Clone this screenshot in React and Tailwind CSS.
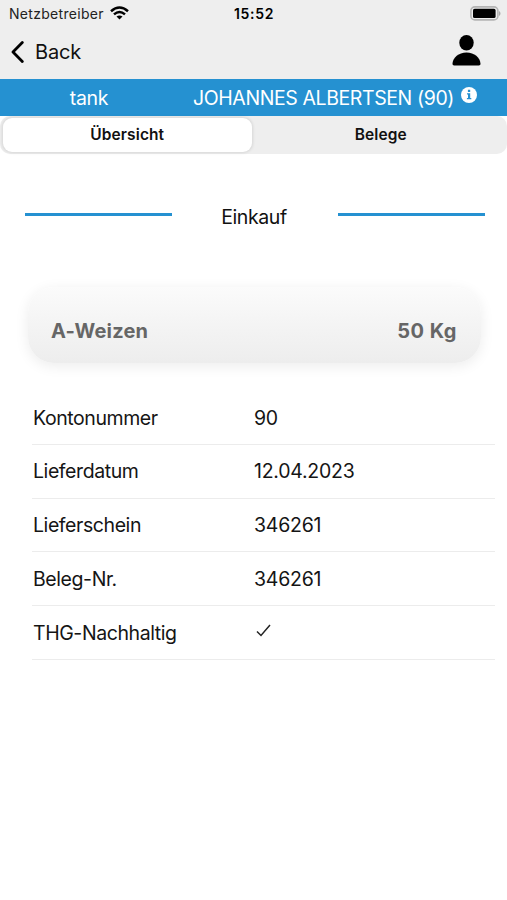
import React, { useState } from 'react';

const rows = [
  { label: 'Kontonummer', value: '90' },
  { label: 'Lieferdatum', value: '12.04.2023' },
  { label: 'Lieferschein', value: '346261' },
  { label: 'Beleg-Nr.', value: '346261' },
  { label: 'THG-Nachhaltig', value: true },
];

// Carrier, clock and battery
function StatusBar() {
  return (
    <div className="grid h-[27px] grid-cols-3 items-center pl-[9px] pr-[6px] text-[14px] text-[#222]">
      <div className="flex items-center gap-[6px]">
        <span className="tracking-[0.3px]">Netzbetreiber</span>
        <svg className="mb-[2px] h-[14px] w-[19px]" viewBox="0 0 19 14" fill="none" stroke="#000" strokeWidth="2.5">
          <path d="M1 5.2Q9.5-2.2 18 5.2" />
          <path d="M4 8.4Q9.5 3.6 15 8.4" />
          <path d="M9.5 13.4L6.5 10.6Q9.5 8.2 12.5 10.6Z" fill="#000" stroke="none" />
        </svg>
      </div>
      <span className="-ml-[2px] text-center font-semibold tracking-[0.7px] text-black">15:52</span>
      <svg className="h-[15px] w-[31px] justify-self-end" viewBox="0 0 31 15">
        <rect x="0.9" y="0.9" width="27" height="13" rx="4" fill="none" stroke="#b4b4b4" strokeWidth="1.6" />
        <rect x="3" y="2.8" width="22.6" height="9.2" rx="1.6" fill="#000" />
        <path d="M29 5v5c2-1 2-4 0-5z" fill="#aaa" />
      </svg>
    </div>
  );
}

function Header() {
  return (
    <div className="flex h-[52px] items-center justify-between pl-[11px] pr-[26px]">
      <button className="flex items-center gap-[11px] pb-[2px] text-[20px] text-[#111]">
        <svg className="h-[22px] w-[13px]" viewBox="0 0 13 22" fill="none" stroke="#000" strokeWidth="2.8" strokeLinecap="round" strokeLinejoin="round">
          <path d="M11.3 1.6L2 11l9.3 9.4" />
        </svg>
        <span className="-mt-px tracking-[-0.2px]">Back</span>
      </button>
      <svg className="mb-[5px] h-[31px] w-[29px]" viewBox="0 0 29 31">
        <ellipse cx="14.5" cy="7.8" rx="7.2" ry="7.7" />
        <path d="M2.3 30.500C1 30.500.4 29.800.5 28.500 1 22.500 6.500 17.500 14.500 17.500S28 22.500 28.500 28.500c.1 1.300-.5 2-1.800 2z" />
      </svg>
    </div>
  );
}

function AccountBar() {
  return (
    <div className="flex h-[37px] items-center bg-[#2591d1] pt-[2px] text-[19.500px] text-white">
      <span className="w-[178px] text-center tracking-[-0.3px]">tank</span>
      <div className="ml-[15px] flex items-center gap-[7px]">
        <span className="whitespace-nowrap tracking-[-0.4px]">JOHANNES ALBERTSEN (90)</span>
        <svg className="mb-[7px] h-[16px] w-[16px]" viewBox="0 0 16 16">
          <circle cx="8" cy="8" r="8" fill="#fff" />
          <path d="M6.900 2.800h2.300v2.100H6.900zM6 6.300h3.200v4.700h1.100v1.300H5.900V11H7V7.600H6z" fill="#2591d1" />
        </svg>
      </div>
    </div>
  );
}

function Tabs() {
  const [active, setActive] = useState('Übersicht');

  return (
    <div className="flex h-[38px] gap-[5px] rounded-[10px] bg-[#eee] py-[2px] pl-[3px] pr-[2px]">
      {['Übersicht', 'Belege'].map((tab) => (
        <button
          key={tab}
          onClick={() => setActive(tab)}
          className={`flex-1 rounded-[9px] text-[15.5px] font-semibold tracking-[0.1px] text-[#111] ${
            active === tab ? 'bg-white shadow-[0_0_3px_1px_rgba(0,0,0,0.1)]' : ''
          }`}
        >
          {tab}
        </button>
      ))}
    </div>
  );
}

function App() {
  return (
    <div className="min-h-[900px] w-full bg-white font-['Inter',sans-serif] leading-none">
      <header className="bg-[#eee]">
        <StatusBar />
        <Header />
      </header>
      <AccountBar />
      <Tabs />

      {/* Section title between two rules */}
      <div className="mt-[48px] flex h-[28px] items-center justify-between pl-[25px] pr-[22px]">
        <div className="mb-[3px] h-[3px] w-[147px] bg-[#2591d1]" />
        <span className="pr-[2px] pt-[3px] text-[19.500px] tracking-[-0.4px] text-[#111]">Einkauf</span>
        <div className="mb-[3px] h-[3px] w-[147px] bg-[#2591d1]" />
      </div>

      <div className="ml-[28px] mr-[26px] mt-[57px] flex h-[76px] items-center justify-between rounded-[26px] bg-linear-to-b from-[#fbfbfb] to-[#ededed] pl-[23px] pr-[24px] pt-[12px] text-[20px] font-bold text-[#666] shadow-[0_3px_14px_rgba(0,0,0,0.08)]">
        <span className="tracking-[0.2px]">A-Weizen</span>
        <span className="tracking-[0.5px]">50 Kg</span>
      </div>

      <div className="ml-[32px] mr-[12px] mt-[28px] text-[19.500px] text-[#151515]">
        {rows.map((row) => (
          <div key={row.label} className="flex h-[53.750px] items-center border-b border-[#ececec] pl-px pt-[2px]">
            <span className="w-[221px] tracking-[-0.42px]">{row.label}</span>
            {row.value === true ? (
              <svg className="mb-[6px] ml-[2px] h-[13px] w-[15px]" viewBox="0 0 15 13" fill="none" stroke="#222" strokeWidth="1.5">
                <path d="M1 7.500L5 11.500 14 1" />
              </svg>
            ) : (
              <span className="tracking-[-0.25px]">{row.value}</span>
            )}
          </div>
        ))}
      </div>
    </div>
  );
}

export default App;
